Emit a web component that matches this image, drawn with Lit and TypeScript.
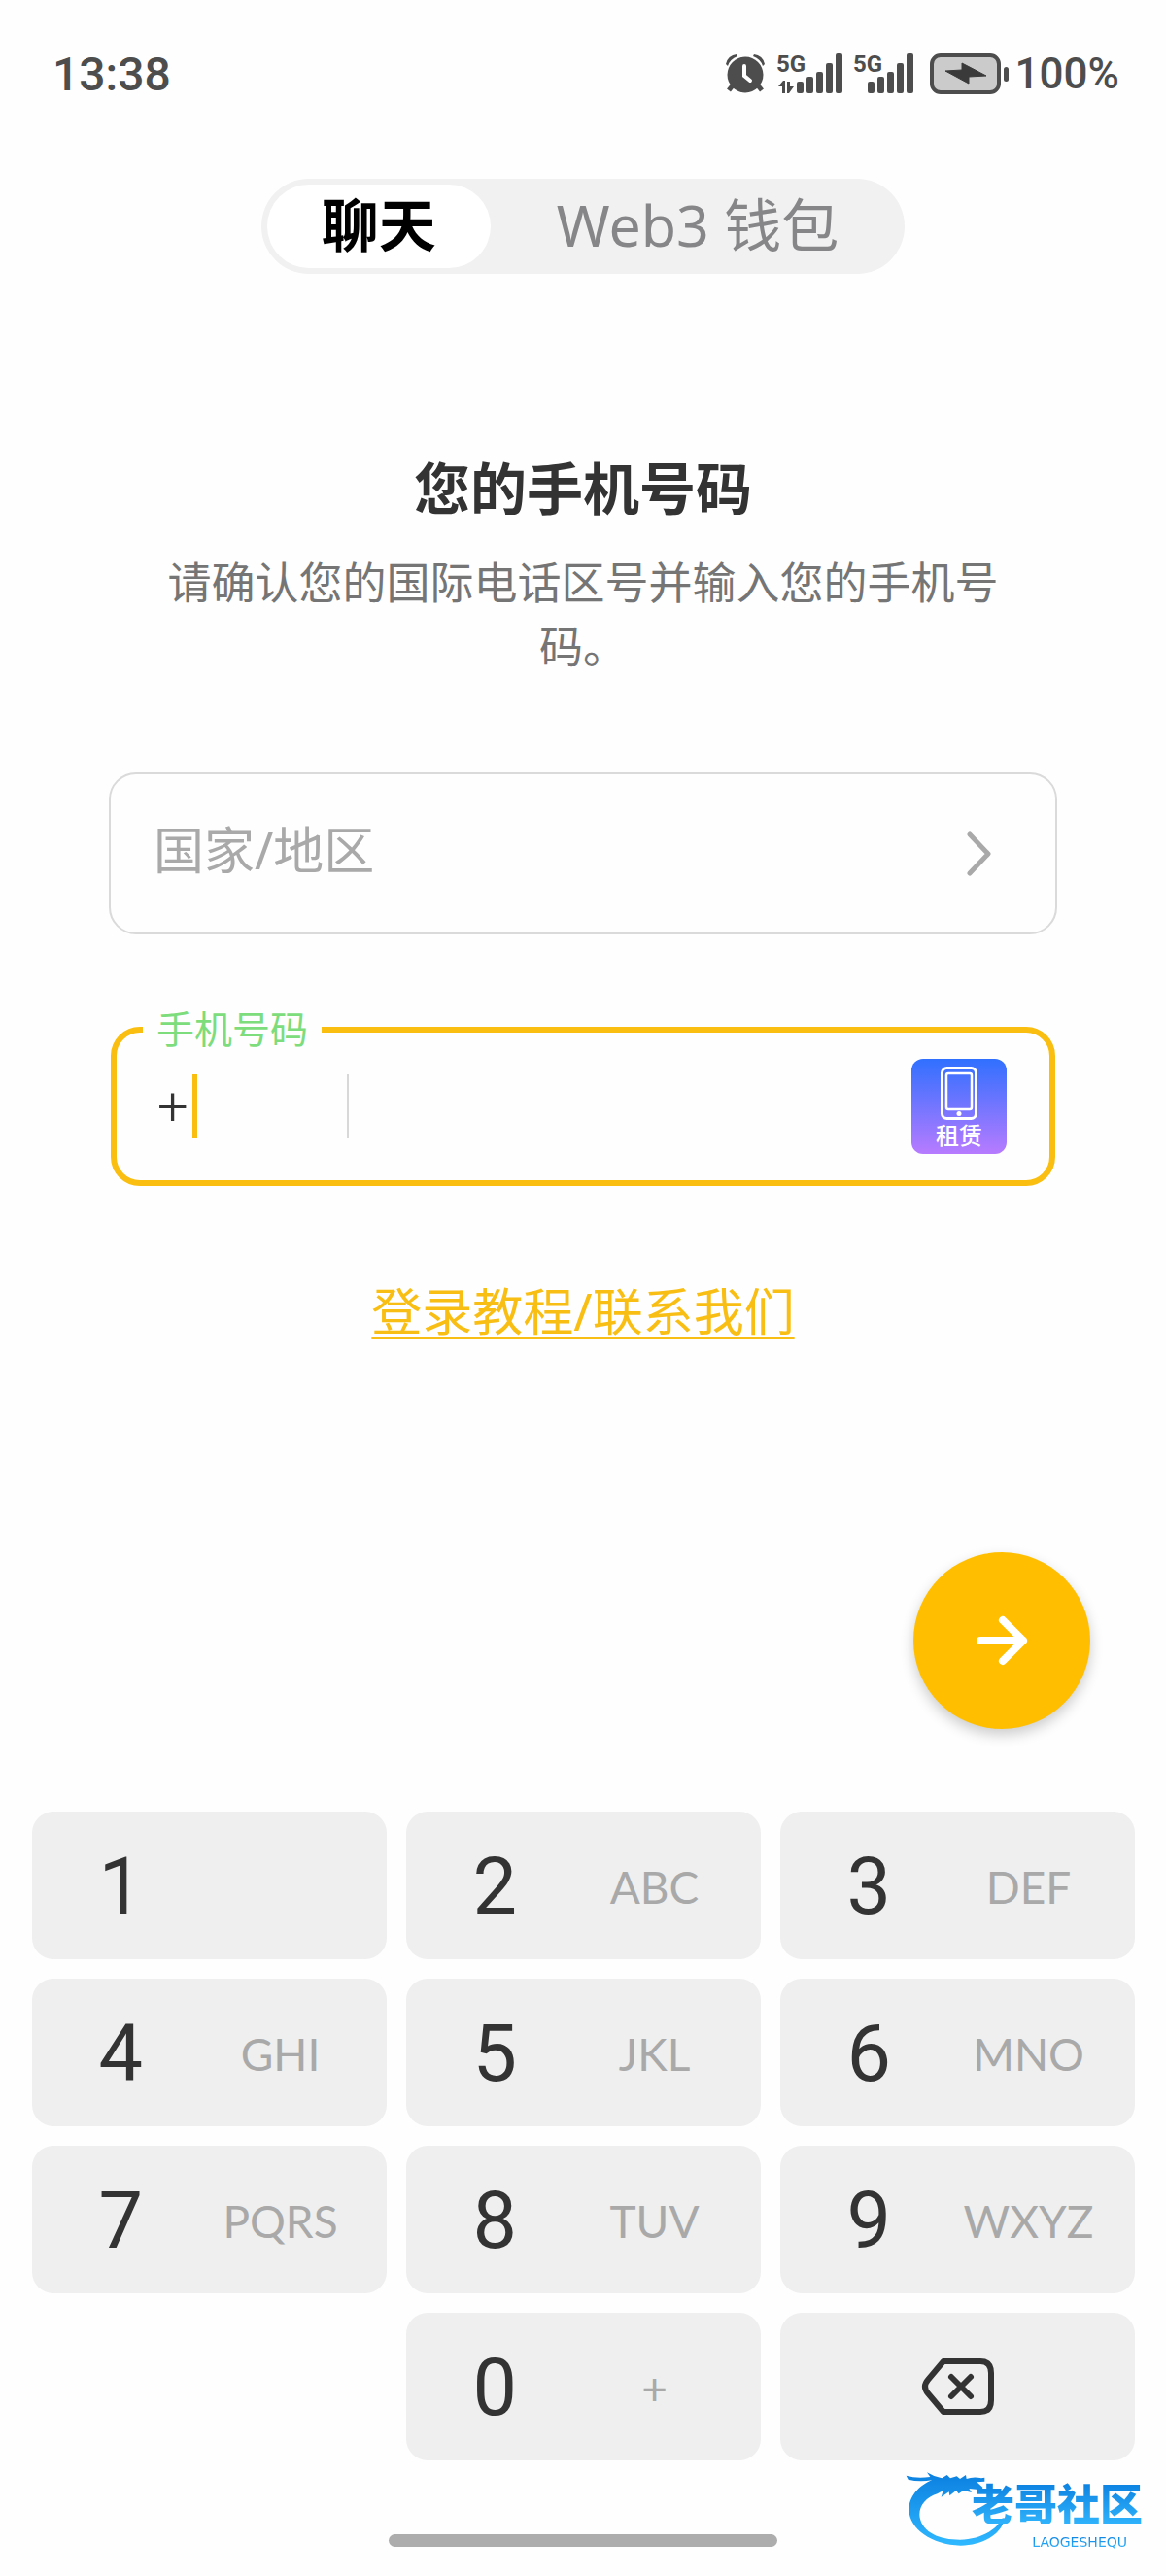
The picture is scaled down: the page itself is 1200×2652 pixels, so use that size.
import { LitElement, html, css, svg } from "lit";
import { customElement, state } from "lit/decorators.js";

interface Key {
  digit: string;
  letters: string;
}

const KEYS: Key[] = [
  { digit: "1", letters: "" },
  { digit: "2", letters: "ABC" },
  { digit: "3", letters: "DEF" },
  { digit: "4", letters: "GHI" },
  { digit: "5", letters: "JKL" },
  { digit: "6", letters: "MNO" },
  { digit: "7", letters: "PQRS" },
  { digit: "8", letters: "TUV" },
  { digit: "9", letters: "WXYZ" },
  { digit: "0", letters: "+" },
];

/* Signal bars, tallest last; x is the left edge of the first bar. */
const bars = (x: number) =>
  [29, 24, 19, 10, 0].map(
    (top, i) => svg`<rect x=${x + i * 10} y=${top} width="7" height=${41 - top} rx="2"></rect>`
  );

@customElement("status-bar")
export class StatusBar extends LitElement {
  static styles = css`
    :host {
      display: flex;
      align-items: center;
      justify-content: space-between;
      height: 152px;
      padding: 0 48px 0 54px;
      color: #4d4d4d;
      font-family: Roboto, "Liberation Sans", sans-serif;
      font-weight: 500;
    }
    .time {
      font-size: 48px;
    }
    .icons {
      display: flex;
      align-items: center;
    }
    .icons svg {
      display: block;
      fill: currentColor;
    }
    .alarm {
      margin-right: 8px;
    }
    .signal {
      margin-right: 8px;
    }
    .battery {
      margin: 0 6px 0 8px;
    }
    .tag {
      font: 700 24px Roboto, sans-serif;
    }
    .level {
      font-size: 44px;
    }
  `;

  render() {
    return html`
      <span class="time">13:38</span>
      <div class="icons">
        <svg class="alarm" width="42" height="42" viewBox="0 0 42 42" aria-hidden="true">
          <circle cx="21" cy="22" r="18.500"></circle>
          <path d="M1 11 A12 12 0 0 1 12 1 L13 3 Q5 6 3 13 Z M41 11 A12 12 0 0 0 30 1 L29 3 Q37 6 39 13 Z"></path>
          <path d="M8 33 L4 38 M34 33 L38 38" stroke="currentColor" stroke-width="5"></path>
          <path d="M20 13 V23 L26 28" fill="none" stroke="#fefefe" stroke-width="4" stroke-linecap="round"></path>
        </svg>
        <svg class="signal" width="71" height="54" viewBox="-4 -6 71 54" aria-hidden="true">
          <text class="tag" x="-1" y="19">5G</text>
          <path d="M1 34 L6 28 H8 V41 H5 V34 Z M10 29 H13 V34 L17 34 L12 41 H10 Z"></path>
          ${bars(20)}
        </svg>
        <svg class="signal" width="66" height="54" viewBox="-4 -6 66 54" aria-hidden="true">
          <text class="tag" x="-1" y="19">5G</text>
          ${bars(14)}
        </svg>
        <svg class="battery" width="82" height="42" viewBox="0 0 82 42" aria-hidden="true">
          <rect x="2" y="2" width="69" height="38" rx="9" fill="#cbcbcb" stroke="currentColor" stroke-width="4"></rect>
          <rect x="76" y="14" width="5" height="15" rx="2.500"></rect>
          <path d="M16 18 L33 17 V10 L58 23 L40 24 V31 Z" fill="#3a3a3a" stroke="#3a3a3a" stroke-linejoin="round"></path>
        </svg>
        <span class="level">100%</span>
      </div>
    `;
  }
}

@customElement("key-pad")
export class KeyPad extends LitElement {
  static styles = css`
    :host {
      display: grid;
      grid-template-columns: repeat(3, 1fr);
      grid-auto-rows: 152px;
      gap: 20px;
      padding: 0 32px 0 33px;
      color: #333;
      font-family: Roboto, "Liberation Sans", sans-serif;
    }
    .key {
      display: grid;
      grid-template-columns: 5fr 4fr 1fr;
      align-items: center;
      padding: 4px 0 0;
      border: 0;
      border-radius: 22px;
      background: #efefef;
      color: inherit;
      font-family: inherit;
      text-align: center;
    }
    .digit {
      font-size: 81px;
      line-height: 96px;
    }
    .letters {
      color: #a9a9a9;
      font-family: Lato, sans-serif;
      font-size: 46px;
      line-height: 60px;
    }
    .zero {
      grid-column: 2;
    }
    .erase {
      display: flex;
      justify-content: center;
      padding: 0;
    }
  `;

  private press(value: string) {
    this.dispatchEvent(new CustomEvent("key-press", { detail: value }));
  }

  render() {
    return html`
      ${KEYS.map(
        (k) => html`
          <button class="key ${k.digit === "0" ? "zero" : ""}" @click=${() => this.press(k.digit)}>
            <span class="digit">${k.digit}</span>
            <span class="letters">${k.letters}</span>
          </button>
        `
      )}
      <button class="key erase" aria-label="删除" @click=${() => this.press("")}>
        <svg width="76" height="60" viewBox="0 0 76 60" fill="none" stroke="#333" stroke-width="6"
          stroke-linecap="round" stroke-linejoin="round" aria-hidden="true">
          <path d="M23 4 H61 Q72 4 72 16 V44 Q72 56 61 56 H23 L7 37 Q1 30 7 23 Z"></path>
          <path d="M31 20 L51 40 M51 20 L31 40"></path>
        </svg>
      </button>
    `;
  }
}

@customElement("app-root")
export class AppRoot extends LitElement {
  static styles = css`
    :host {
      position: relative;
      display: flex;
      flex-direction: column;
      box-sizing: border-box;
      min-height: 100vh;
      background: #fefefe;
      color: #333;
      font-family: "Noto Sans", "Noto Sans CJK SC", sans-serif;
    }
    button,
    input {
      font-family: inherit;
    }
    .tabs {
      display: flex;
      align-self: center;
      box-sizing: border-box;
      height: 98px;
      margin-top: 32px;
      padding: 6px;
      border-radius: 49px;
      background: #f1f1f1;
    }
    .tab {
      padding: 0 62px 4px 68px;
      border: 0;
      border-radius: 43px;
      background: none;
      color: #868689;
      font-size: 59px;
      line-height: 80px;
    }
    .tab.active {
      padding: 0 56px 4px;
      background: #fff;
      color: #000;
      font-weight: 700;
    }
    .form {
      display: flex;
      flex-direction: column;
      margin: 185px 112px 0;
    }
    .title {
      margin: 0;
      font-size: 58px;
      line-height: 72px;
      text-align: center;
    }
    .hint {
      margin: 28px 48px 96px;
      color: #757575;
      font-size: 45px;
      line-height: 66px;
      text-align: center;
    }
    .country {
      display: flex;
      align-items: center;
      justify-content: space-between;
      height: 167px;
      padding: 0 64px 0 44px;
      border: 2px solid #dadada;
      border-radius: 28px;
      background: none;
      color: #a9a9a9;
      font-size: 52px;
    }
    .country .text {
      padding-bottom: 12px;
    }
    .phone {
      position: relative;
      display: flex;
      align-items: center;
      box-sizing: border-box;
      height: 164px;
      margin: 95px 2px;
      padding: 0 44px 0 40px;
      border: 6px solid #f9be10;
      border-radius: 30px;
    }
    .label {
      position: absolute;
      top: -32px;
      left: 27px;
      padding: 0 14px;
      background: #fefefe;
      color: #7ddc7c;
      font-size: 39px;
      line-height: 56px;
    }
    .code {
      position: relative;
      flex: none;
      display: flex;
      width: 197px;
      border-right: 2px solid #d8d8d8;
    }
    .code input,
    .number {
      box-sizing: border-box;
      height: 66px;
      padding: 0;
      border: 0;
      outline: 0;
      background: none;
      color: #333;
      font-size: 56px;
    }
    .code input {
      width: 100%;
      padding-left: 2px;
      font-family: Roboto, sans-serif;
      font-weight: 300;
    }
    .caret {
      position: absolute;
      top: 0;
      left: 38px;
      width: 5px;
      height: 66px;
      background: #f9be10;
    }
    .number {
      flex: 1;
      min-width: 0;
      padding: 0 24px;
    }
    .rent {
      display: flex;
      flex-direction: column;
      align-items: center;
      width: 98px;
      height: 98px;
      padding: 8px 0 0;
      border: 0;
      border-radius: 12px;
      background: linear-gradient(#3070ff, #b77bff);
      color: #fff;
      font-size: 24px;
      font-weight: 500;
      line-height: 30px;
    }
    .rent svg {
      flex: none;
    }
    .help {
      align-self: center;
      color: #f9be14;
      font-size: 52px;
      line-height: 68px;
      text-decoration-thickness: 3px;
      text-underline-offset: 6px;
      text-decoration-skip-ink: none;
    }
    .next {
      display: flex;
      align-items: center;
      justify-content: center;
      align-self: flex-end;
      width: 182px;
      height: 182px;
      margin: 214px 78px 85px 0;
      padding: 0;
      border: 0;
      border-radius: 50%;
      background: #ffbf00;
      box-shadow: 0 6px 14px rgba(0, 0, 0, 0.2);
    }
    .home {
      align-self: center;
      width: 33.3333%;
      height: 13px;
      margin: 76px 0 30px;
      border-radius: 7px;
      background: #adadad;
    }
    .mark {
      position: absolute;
      right: 20px;
      bottom: 26px;
      width: 248px;
      height: 86px;
    }
    .mark svg {
      display: block;
    }
    .name,
    .latin {
      position: absolute;
      background: linear-gradient(#0b7fe0, #2fb2fb);
      background-clip: text;
      -webkit-background-clip: text;
      color: transparent;
    }
    .name {
      top: 14px;
      right: 4px;
      font-size: 44px;
      font-weight: 900;
      line-height: 44px;
      font-family: "Noto Sans CJK SC", sans-serif;
    }
    .latin {
      right: 20px;
      bottom: 2px;
      font-family: "DejaVu Sans", sans-serif;
      font-size: 14px;
      line-height: 14px;
    }
  `;

  @state() private code = "+";
  @state() private tab = 0;

  private onKey(e: CustomEvent<string>) {
    this.code = e.detail ? this.code + e.detail : this.code.slice(0, -1) || "+";
  }

  render() {
    return html`
      <status-bar></status-bar>
      <nav class="tabs">
        ${["聊天", "Web3 钱包"].map(
          (t, i) => html`
            <button class="tab ${this.tab === i ? "active" : ""}" @click=${() => (this.tab = i)}>${t}</button>
          `
        )}
      </nav>
      <main class="form">
        <h1 class="title">您的手机号码</h1>
        <p class="hint">请确认您的国际电话区号并输入您的手机号码。</p>
        <button class="country">
          <span class="text">国家/地区</span>
          <svg width="28" height="48" viewBox="0 0 28 48" fill="none" stroke="#a9a9a9" stroke-width="5"
            stroke-linecap="round" stroke-linejoin="round" aria-hidden="true">
            <path d="M4 4 L23 24 L4 44"></path>
          </svg>
        </button>
        <div class="phone">
          <label class="label" for="number">手机号码</label>
          <div class="code">
            <input id="code" type="text" inputmode="numeric" aria-label="区号" .value=${this.code} />
            ${this.code === "+" ? html`<span class="caret"></span>` : ""}
          </div>
          <input class="number" id="number" type="tel" />
          <button class="rent">
            <svg width="38" height="56" viewBox="0 0 38 56" fill="none" stroke="#fff" aria-hidden="true">
              <rect x="1.500" y="1.500" width="35" height="52" rx="5" stroke-width="3"></rect>
              <rect x="6" y="7" width="26" height="37" rx="2" stroke-width="2.500"></rect>
              <circle cx="19" cy="48.500" r="2.500" fill="#fff" stroke="none"></circle>
            </svg>
            租赁
          </button>
        </div>
        <a class="help" href="#help">登录教程/联系我们</a>
      </main>
      <button class="next" aria-label="下一步">
        <svg width="56" height="56" viewBox="0 0 56 56" fill="none" stroke="#fff" stroke-width="8"
          stroke-linecap="round" stroke-linejoin="round" aria-hidden="true">
          <path d="M6 28 H50 M29 7 L50 28 L29 49"></path>
        </svg>
      </button>
      <key-pad @key-press=${this.onKey}></key-pad>
      <div class="home"></div>
      <div class="mark">
        <svg width="248" height="86" viewBox="36 60 744 258" aria-hidden="true">
          <defs>
            <linearGradient id="wave" x1="0" y1="0" x2="0" y2="1">
              <stop offset="0" stop-color="#0b7fe0"></stop>
              <stop offset="1" stop-color="#2fb8ff"></stop>
            </linearGradient>
          </defs>
          <g fill="url(#wave)">
            <path d="M38 86 Q70 96 112 90 L102 76 Q124 90 148 94 L164 84 L174 94 L194 88 L204 96 L222 84 L224 96
              Q246 88 270 94 L280 92 V104 L256 106 L274 122 L272 136 L254 128 L232 126 L240 138 L214 132 L200 142
              L192 132 L172 148 L170 136 L146 152 L152 132 L134 142
              C96 154 74 184 80 216 C90 262 140 284 204 284 C262 284 316 256 332 220 L338 216 L336 236
              C318 274 266 302 206 302 C116 300 48 250 46 192 C46 152 76 116 118 100 Q76 106 44 98 Z"></path>
          </g>
        </svg>
        <span class="name">老哥社区</span>
        <span class="latin">LAOGESHEQU</span>
      </div>
    `;
  }
}
